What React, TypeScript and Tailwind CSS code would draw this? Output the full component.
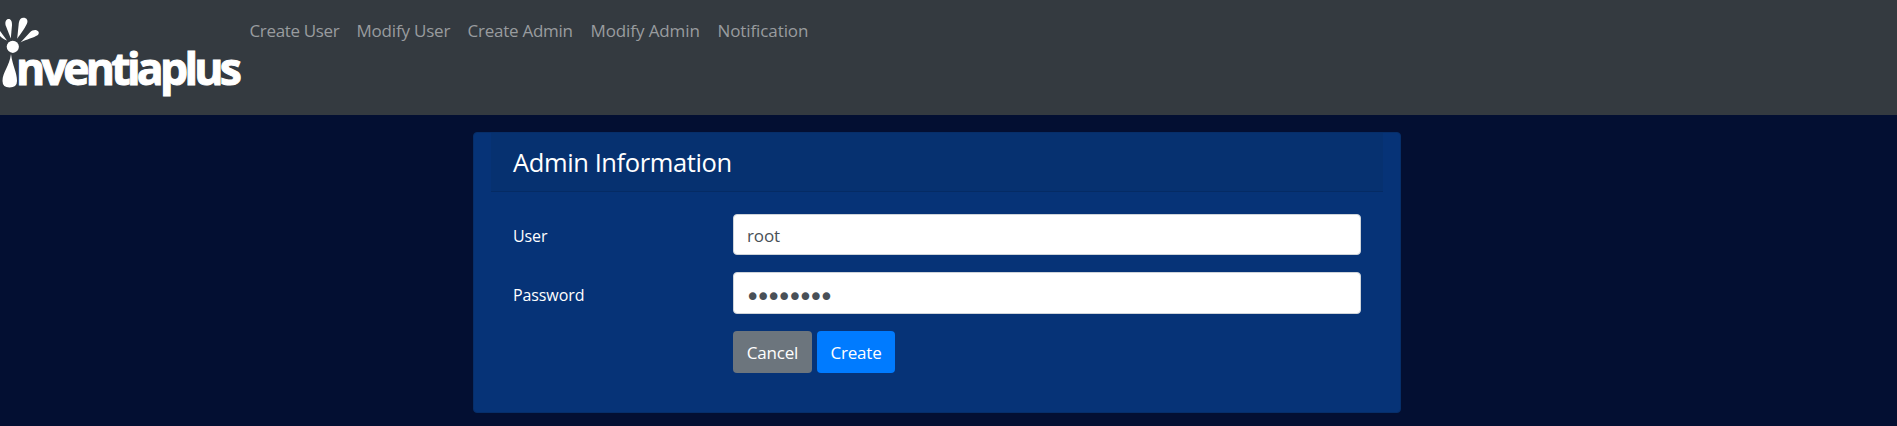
import React from "react";

const navItems = [
  { label: "Create User", box: "w-[107px]", track: "tracking-[-0.35px]" },
  { label: "Modify User", box: "w-[111px]", track: "tracking-[-0.2px]" },
  { label: "Create Admin", box: "w-[123px]", track: "tracking-[-0.25px]" },
  { label: "Modify Admin", box: "w-[127px]", track: "tracking-[-0.1px]" },
  { label: "Notification", box: "w-[107px]", track: "tracking-[-0.1px]" },
];

function Logo() {
  return (
    <svg width="249" height="115" viewBox="0 0 249 115" fill="#fff" className="shrink-0" aria-label="inventiaplus">
      <path d="M11 54C9.500 66 2.500 72 2.500 81Q2.500 87.500 9.500 87.500Q17 87.500 17 81C17 72 12.500 66 11 54Z" />
      <circle cx="12.800" cy="46.800" r="6.100" />
      <path d="M10.800 38.500L5.700 25.500C4.500 21.500 6.500 19 8.600 19C11 19 12 21.500 12 25Z" />
      <path d="M17.200 38.800L18.800 23C19.300 19.500 21 17.700 23.500 17.700C26.500 17.700 28 20 27.300 22.500C26.500 26 20.500 34 17.200 38.800Z" />
      <path d="M20.500 42.500L29.800 32.500C32 30.300 34.200 29.800 36.500 30.200C39.200 31 39.500 33.800 37.500 35.300C34 37.500 26.500 39.500 20.500 42.500Z" />
      <path d="M7 40.500L0 31V36C2 38 4.500 39.500 7 40.500Z" />
      <text
        x="16"
        y="84.500"
        stroke="#fff"
        strokeWidth="1"
        className="font-['Open_Sans',sans-serif] text-[44.500px] font-bold tracking-[-3.7px]"
      >
        nventiaplus
      </text>
    </svg>
  );
}

const field =
  "w-[628px] rounded-[4px] border border-[#ced4da] bg-white text-[#495057] outline-none";

export default function App() {
  return (
    <div className="flex h-[426px] w-full flex-col overflow-hidden bg-[#030f32] font-['Open_Sans','Noto_Sans',sans-serif] text-[17px] leading-[26px]">
      <nav className="flex h-[115px] shrink-0 items-start bg-[#343a40]">
        <Logo />
        <ul className="flex pl-[0.5px] pt-[18px] text-[#999c9f]">
          {navItems.map((item) => (
            <li key={item.label} className={`${item.box} ${item.track} whitespace-nowrap`}>
              <a href="#">{item.label}</a>
            </li>
          ))}
        </ul>
      </nav>
      <main className="ml-[473px] mt-[17px] flex h-[281px] w-[928px] shrink-0 flex-col rounded-[4px] border border-[#062e69] bg-[#063377] px-[17px] text-white">
        <h4 className="h-[59px] border-b border-[#052b64] bg-[#063170] pl-[22px] pt-[13px] text-[25.500px] leading-[32px] tracking-[-0.4px]">
          Admin Information
        </h4>
        <form className="flex flex-col pl-[22px] pt-[22px]">
          <div className="flex h-[58px] items-start">
            <label htmlFor="user" className="w-[220px] pt-[9px] text-[16px] tracking-[-0.1px]">User</label>
            <input id="user" className={`${field} h-[41px] px-[13px] pt-[1px] tracking-[-0.1px]`} defaultValue="root" />
          </div>
          <div className="flex h-[59px] items-start">
            <label htmlFor="password" className="w-[220px] pt-[10px] text-[16px] tracking-[-0.1px]">Password</label>
            <input
              id="password"
              type="password"
              className={`${field} h-[42px] pl-[11px] pt-[8px] font-['DejaVu_Sans',sans-serif] text-[26px] tracking-[-4.8px]`}
              defaultValue="password"
            />
          </div>
          <div className="ml-[220px] flex gap-[5px]">
            <button type="button" className="h-[42px] w-[79px] rounded-[4px] bg-[#6c757d] pt-[2px] tracking-[-0.2px]">
              Cancel
            </button>
            <button type="button" className="h-[42px] w-[78px] rounded-[4px] bg-[#007bff] pt-[2px] tracking-[-0.2px]">
              Create
            </button>
          </div>
        </form>
      </main>
    </div>
  );
}
